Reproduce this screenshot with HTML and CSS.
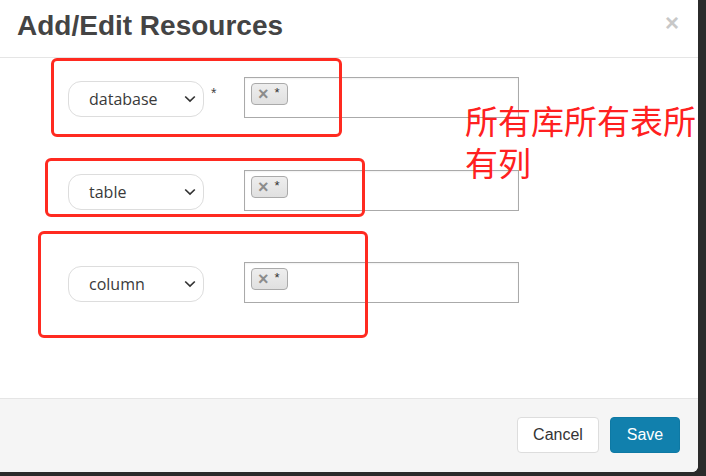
FILE: index.html
```html
<!DOCTYPE html>
<html lang="en">
<head>
  <meta charset="UTF-8">
  <title>Add/Edit Resources</title>
  <link rel="stylesheet" href="styles.css">
</head>
<body>
  <div class="modal">
    <div class="modal-header">
      <h4 class="modal-title">Add/Edit Resources</h4>
      <span class="close">&times;</span>
    </div>

    <div class="modal-body">
      <div class="resource-row">
        <div class="type-cell">
          <div class="fake-select">
            <span>database</span>
            <svg class="chevron" width="12" height="8" viewBox="0 0 12 8"><path d="M1.2 1.5l4.8 4.6 4.8-4.6" fill="none" stroke="#333" stroke-width="1.7"/></svg>
          </div>
          <span class="required">*</span>
        </div>
        <div class="tag-input">
          <span class="tag"><span class="tag-remove">&times;</span>*</span>
        </div>
      </div>

      <div class="resource-row">
        <div class="type-cell">
          <div class="fake-select">
            <span>table</span>
            <svg class="chevron" width="12" height="8" viewBox="0 0 12 8"><path d="M1.2 1.5l4.8 4.6 4.8-4.6" fill="none" stroke="#333" stroke-width="1.7"/></svg>
          </div>
        </div>
        <div class="tag-input">
          <span class="tag"><span class="tag-remove">&times;</span>*</span>
        </div>
      </div>

      <div class="resource-row">
        <div class="type-cell">
          <div class="fake-select">
            <span>column</span>
            <svg class="chevron" width="12" height="8" viewBox="0 0 12 8"><path d="M1.2 1.5l4.8 4.6 4.8-4.6" fill="none" stroke="#333" stroke-width="1.7"/></svg>
          </div>
        </div>
        <div class="tag-input">
          <span class="tag"><span class="tag-remove">&times;</span>*</span>
        </div>
      </div>
    </div>

    <div class="modal-footer">
      <button class="btn btn-default">Cancel</button>
      <button class="btn btn-primary">Save</button>
    </div>

    <!-- red annotations drawn over the dialog -->
    <div class="mark mark-db"></div>
    <div class="mark mark-table"></div>
    <div class="mark mark-column"></div>
    <div class="note">所有库所有表所有列</div>
  </div>
</body>
</html>
```

FILE: styles.css
```css
* {
  margin: 0;
  padding: 0;
  box-sizing: border-box;
}

body {
  background-color: #2b2b2b;
  font-family: "Liberation Sans", Arial, sans-serif;
  color: #333;
}

.modal {
  position: relative;
  width: 698px;
  height: 472px;
  background-color: white;
  border-radius: 0 0 6px 0;
  display: flex;
  flex-direction: column;
  overflow: hidden;
}

.modal-header {
  height: 58px;
  padding: 10px 19px 0 17px;
  border-bottom: 1px solid #e5e5e5;
  display: flex;
  align-items: flex-start;
  justify-content: space-between;
}

.modal-title {
  font-size: 28px;
  line-height: 32px;
  font-weight: 700;
  color: #444;
}

.close {
  margin-top: 1px;
  font-size: 24px;
  line-height: 24px;
  font-weight: 700;
  color: #c8c8c8;
}

.modal-body {
  flex: 1;
  padding: 19px 0 0 68px;
  display: flex;
  flex-direction: column;
  gap: 52px;
}

.resource-row {
  display: flex;
  align-items: flex-start;
  height: 41px;
}

.type-cell {
  width: 176px;
  display: flex;
  align-items: flex-start;
  padding-top: 4px;
}

.resource-row:last-child .type-cell {
  padding-top: 3px;
}

.fake-select {
  width: 136px;
  height: 36px;
  border: 1px solid #ddd;
  border-radius: 13px;
  padding: 0 7px 0 20px;
  display: flex;
  align-items: center;
  justify-content: space-between;
  font-family: "Open Sans", "Noto Sans", sans-serif;
  font-size: 16px;
  color: #3a3a3a;
}

.required {
  margin: 4px 0 0 7px;
  font-size: 14px;
  color: #444;
}

.tag-input {
  width: 275px;
  height: 41px;
  border: 1px solid #aaa;
  box-shadow: inset 0 1px 2px rgba(0, 0, 0, 0.06);
  padding: 5px 0 0 6px;
}

.resource-row:last-child .tag-input {
  margin-top: -1px;
}

.tag {
  display: inline-flex;
  align-items: flex-start;
  width: 37px;
  height: 22px;
  border: 1px solid #aaa;
  border-radius: 4px;
  background: linear-gradient(#eee, #e0e0e0);
  padding: 1px 0 0 6px;
  font-size: 13px;
  color: #333;
}

.tag-remove {
  font-size: 18px;
  font-weight: 700;
  color: #8c8c8c;
  line-height: 18px;
  margin-right: 6px;
}

.modal-footer {
  height: 74px;
  border-top: 1px solid #e5e5e5;
  background-color: #f5f5f5;
  padding: 18px 18px 19px;
  display: flex;
  justify-content: flex-end;
  gap: 11px;
}

.btn {
  height: 36px;
  border-radius: 4px;
  font-family: "Liberation Sans", Arial, sans-serif;
  font-size: 16px;
}

.btn-default {
  width: 82px;
  background-color: white;
  border: 1px solid #ddd;
  color: #333;
}

.btn-primary {
  width: 70px;
  background-color: #1180ad;
  border: 1px solid #0e79a4;
  color: white;
}

.mark {
  position: absolute;
  border: 3px solid #ff2a20;
  border-radius: 6px;
}

.mark-db {
  left: 51px;
  top: 58px;
  width: 291px;
  height: 79px;
}

.mark-table {
  left: 45px;
  top: 158px;
  width: 320px;
  height: 59px;
}

.mark-column {
  left: 38px;
  top: 231px;
  width: 330px;
  height: 107px;
}

.note {
  position: absolute;
  left: 465px;
  top: 99px;
  width: 240px;
  font-family: "Noto Sans CJK SC", sans-serif;
  font-size: 33px;
  line-height: 42px;
  color: #ff2020;
}
```
